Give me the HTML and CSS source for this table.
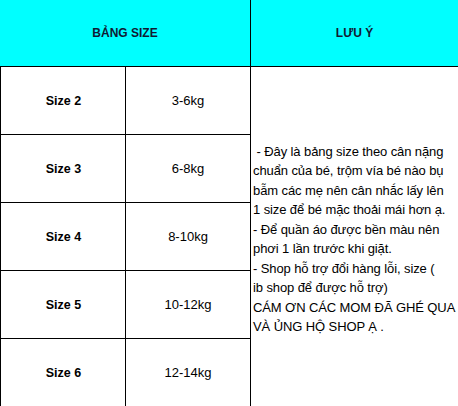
FILE: index.html
```html
<!DOCTYPE html>
<html lang="vi">
<head>
<meta charset="utf-8">
<title>Bảng size</title>
<link rel="stylesheet" href="styles.css">
</head>
<body>
<div class="sheet">
  <div class="cell head head-size">BẢNG SIZE</div>
  <div class="cell head head-note">LƯU Ý</div>

  <div class="cell size">Size 2</div>
  <div class="cell weight">3-6kg</div>
  <div class="cell note">
    <p class="note-text"> - Đây là bảng size theo cân nặng<br>chuẩn của bé, trộm vía bé nào bụ<br>bẫm các mẹ nên cân nhắc lấy lên<br>1 size để bé mặc thoải mái hơn ạ.<br>- Để quần áo được bền màu nên<br>phơi 1 lần trước khi giặt.<br>- Shop hỗ trợ đổi hàng lỗi, size (<br>ib shop để được hỗ trợ)<br>CÁM ƠN CÁC MOM ĐÃ GHÉ QUA<br>VÀ ỦNG HỘ SHOP Ạ .</p>
  </div>

  <div class="cell size">Size 3</div>
  <div class="cell weight">6-8kg</div>

  <div class="cell size">Size 4</div>
  <div class="cell weight">8-10kg</div>

  <div class="cell size">Size 5</div>
  <div class="cell weight">10-12kg</div>

  <div class="cell size">Size 6</div>
  <div class="cell weight">12-14kg</div>
</div>
</body>
</html>
```

FILE: styles.css
```css
html, body {
  margin: 0;
  padding: 0;
  background: #ffffff;
}

body {
  font-family: "Liberation Sans", Arial, sans-serif;
  color: #000000;
  overflow: hidden;
}

.sheet {
  display: grid;
  grid-template-columns: 126px 125px 1fr;
  grid-template-rows: 67px repeat(5, 68px);
  width: 458px;
}

.cell {
  box-sizing: border-box;
  border-right: 1px solid #000;
  border-bottom: 1px solid #000;
  display: flex;
  align-items: center;
  justify-content: center;
}

.head {
  background: #00ffff;
  color: #101a33;
  font-weight: bold;
  font-size: 12px;
}

.head-size {
  grid-column: 1 / 3;
}

.head-note {
  border-right: none;
}

.size {
  font-weight: bold;
  font-size: 12.5px;
  border-left: 1px solid #000;
  padding-left: 1px;
}

.weight {
  font-size: 13px;
}

.note {
  grid-column: 3;
  grid-row: 2 / 7;
  border-right: none;
  border-bottom: none;
  justify-content: flex-start;
  padding-left: 2px;
}

.note-text {
  margin: 0;
  font-size: 13px;
  letter-spacing: -0.1px;
  line-height: 19.5px;
  white-space: pre;
  padding-top: 4px;
}
```
